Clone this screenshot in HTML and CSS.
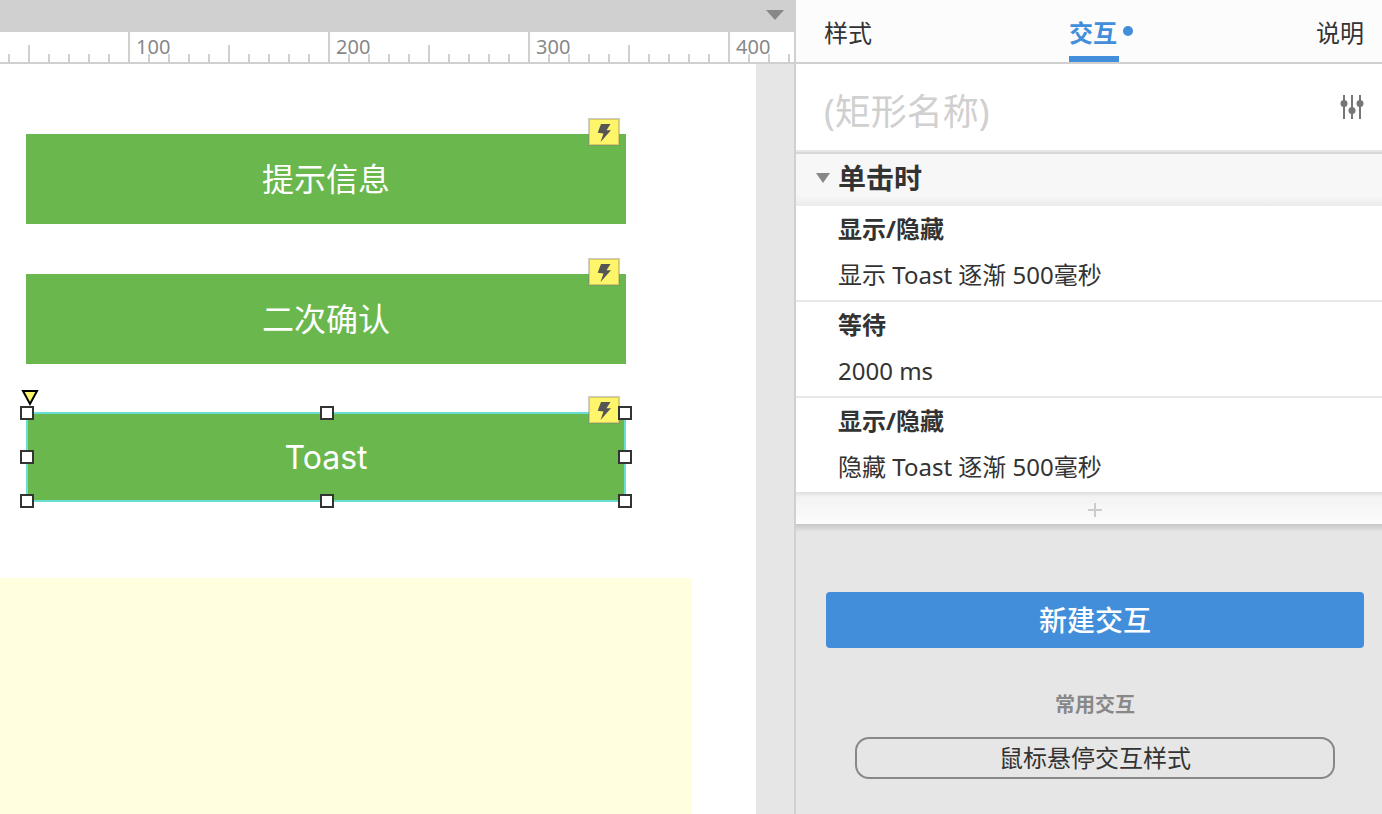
FILE: index.html
```html
<!DOCTYPE html>
<html lang="zh-CN">
<head>
<meta charset="utf-8">
<title>交互</title>
<link rel="stylesheet" href="styles.css">
</head>
<body>
<svg class="defs" aria-hidden="true">
  <symbol id="bolt" viewBox="0 0 32 28"><path d="M13 6h9.500l-4 6.300h4.500L12.500 24l3-8.500-5.800-.8z"/></symbol>
</svg>
<div class="app">
  <main class="workspace">
    <div class="topbar">
      <button class="page-menu" aria-label="页面列表"><svg viewBox="0 0 18 10"><path d="M0 0h18L9 10z"/></svg></button>
    </div>
    <div class="ruler">
      <span class="mark">100</span><span class="mark">200</span><span class="mark">300</span><span class="mark">400</span>
    </div>
    <div class="canvas">
      <div class="page">
        <div class="widget first">提示信息<span class="event"><svg><use href="#bolt"/></svg></span></div>
        <div class="widget second">二次确认<span class="event"><svg><use href="#bolt"/></svg></span></div>
        <div class="widget third selected">Toast<span class="event"><svg><use href="#bolt"/></svg></span>
          <svg class="corner" viewBox="0 0 18 18"><path d="M2 2h14L9 15z"/></svg>
          <i class="handle top left"></i><i class="handle top mid"></i><i class="handle top right"></i>
          <i class="handle center left"></i><i class="handle center right"></i>
          <i class="handle bottom left"></i><i class="handle bottom mid"></i><i class="handle bottom right"></i>
        </div>
        <div class="note"></div>
      </div>
    </div>
  </main>
  <aside class="panel">
    <div class="tabs" role="tablist">
      <button class="tab" role="tab">样式</button>
      <button class="tab active" role="tab" aria-selected="true">交互</button>
      <button class="tab" role="tab">说明</button>
    </div>
    <div class="name-row">
      <input class="name" type="text" placeholder="(矩形名称)" aria-label="矩形名称">
      <button class="settings" aria-label="设置">
        <svg viewBox="0 0 24 24"><path d="M4 0v24M12 0v24M20 0v24"/><circle cx="4" cy="8.500" r="3.500"/><circle cx="12" cy="15.500" r="3.500"/><circle cx="20" cy="8.500" r="3.500"/></svg>
      </button>
    </div>
    <button class="event-head" aria-expanded="true"><svg viewBox="0 0 14 10"><path d="M0 0h14L7 10z"/></svg>单击时</button>
    <ul class="actions">
      <li class="action"><h3 class="title">显示/隐藏</h3><p class="desc">显示 Toast 逐渐 500毫秒</p></li>
      <li class="action"><h3 class="title">等待</h3><p class="desc">2000 ms</p></li>
      <li class="action"><h3 class="title">显示/隐藏</h3><p class="desc">隐藏 Toast 逐渐 500毫秒</p></li>
    </ul>
    <button class="add" aria-label="添加动作"><svg viewBox="0 0 14 14"><path d="M7 0v14M0 7h14"/></svg></button>
    <div class="footer">
      <button class="new">新建交互</button>
      <h4 class="common">常用交互</h4>
      <button class="hover-style">鼠标悬停交互样式</button>
    </div>
  </aside>
</div>
</body>
</html>
```
FILE: styles.css
```css
* {
  box-sizing: border-box;
}

body {
  margin: 0;
  color: #333;
  font-family: "Noto Sans", "Noto Sans CJK SC", sans-serif;
  font-size: 24px;
}

button {
  margin: 0;
  padding: 0;
  border: 0;
  background: none;
  color: inherit;
  font: inherit;
}

svg {
  display: block;
}

.defs {
  position: absolute;
  width: 0;
  height: 0;
}

.app {
  display: flex;
  height: 100vh;
  overflow: hidden;
}

.workspace {
  display: flex;
  flex: 796 1 0;
  flex-direction: column;
  min-width: 0;
}

.topbar {
  display: flex;
  justify-content: flex-end;
  height: 32px;
  padding: 10px 12px 0;
  background: #d0d0d0;
}

.page-menu svg {
  width: 18px;
  height: 10px;
  fill: #888;
}

.page-menu {
  height: 10px;
}

.ruler {
  display: flex;
  height: 32px;
  padding-left: 128px;
  overflow: hidden;
  border-right: 2px solid #d0d0d0;
  border-bottom: 2px solid #d0d0d0;
  background:
    repeating-linear-gradient(90deg, #d0d0d0 0 2px, transparent 2px 20px) 8px 22px / 100% 8px no-repeat,
    repeating-linear-gradient(90deg, #d0d0d0 0 2px, transparent 2px 200px) 28px 13px / 100% 17px no-repeat,
    #fff;
}

.mark {
  flex: none;
  width: 200px;
  height: 30px;
  padding-left: 6px;
  border-left: 2px solid #d0d0d0;
  color: #888;
  font-size: 20px;
  line-height: 30px;
}

.canvas {
  flex: 1;
  min-height: 0;
  padding-right: 38px;
  border-right: 2px solid #d0d0d0;
  background: #e6e6e6;
}

.page {
  position: relative;
  height: 100%;
  overflow: hidden;
  background: #fff;
}

.widget {
  position: absolute;
  left: 26px;
  width: 600px;
  height: 90px;
  background: #69b74d;
  color: #fff;
  font-family: Inter, "Noto Sans CJK SC", sans-serif;
  font-size: 32px;
  line-height: 92px;
  text-align: center;
}

.first {
  top: 70px;
}

.second {
  top: 210px;
}

.third {
  top: 348px;
}

.selected {
  box-shadow: inset 0 0 0 2px #68ded4;
}

.event {
  position: absolute;
  top: -16px;
  right: 6px;
  width: 32px;
  height: 28px;
  border: 1px solid rgba(128, 128, 128, 0.4);
  background: #fff56b padding-box;
  box-shadow: inset 0 0 0 1px #d9ca60;
}

.event svg {
  width: 32px;
  height: 28px;
  margin: -1px;
  fill: #555;
}

.corner {
  position: absolute;
  top: -23px;
  left: -5px;
  width: 18px;
  height: 18px;
  fill: #fff56b;
  stroke: #000;
  stroke-width: 2;
}

.handle {
  position: absolute;
  width: 14px;
  height: 14px;
  border: 2px solid #333;
  background: #fff;
}

.handle.left {
  left: -6px;
}

.handle.mid {
  left: 294px;
}

.handle.right {
  right: -6px;
}

.handle.top {
  top: -6px;
}

.handle.center {
  top: 38px;
}

.handle.bottom {
  bottom: -6px;
}

.note {
  position: absolute;
  top: 514px;
  right: 64px;
  bottom: 0;
  left: 0;
  border-radius: 0 4px 0 0;
  background: #ffffdf;
}

.panel {
  display: flex;
  flex: 586 1 0;
  flex-direction: column;
  min-width: 0;
  overflow: hidden;
  background: #e6e6e6;
}

.tabs {
  display: flex;
  justify-content: space-between;
  height: 64px;
  padding: 0 18px 0 28px;
  border-bottom: 2px solid #d0d0d0;
  background: #fcfcfc;
}

.tab {
  position: relative;
  height: 62px;
  padding-top: 10px;
  border-bottom: 6px solid transparent;
  line-height: 46px;
}

.tab.active {
  padding-right: 2px;
  border-bottom-color: #428edb;
  color: #428edb;
  font-weight: bold;
}

.tab.active::after {
  content: "";
  position: absolute;
  top: 26px;
  right: -14px;
  width: 10px;
  height: 10px;
  border-radius: 50%;
  background: #428edb;
}

.name-row {
  display: flex;
  align-items: center;
  height: 88px;
  padding: 0 18px 0 28px;
  border-bottom: 2px solid #e6e6e6;
  background: #fff;
}

.name {
  flex: 1;
  min-width: 0;
  height: 60px;
  margin-top: 8px;
  padding: 0;
  border: 0;
  outline: 0;
  background: none;
  color: #333;
  font: inherit;
  font-size: 36px;
}

.name::placeholder {
  color: #d0d0d0;
  opacity: 1;
}

.settings svg {
  width: 24px;
  height: 24px;
  fill: #777;
  stroke: #777;
  stroke-width: 2;
}

.settings circle {
  stroke: none;
}

.event-head {
  display: flex;
  align-items: center;
  gap: 8px;
  height: 54px;
  padding: 0 20px 4px;
  border-top: 2px solid #d8d8d8;
  background: linear-gradient(#f7f7f7 80%, #ebebeb);
  font-size: 28px;
  font-weight: bold;
  line-height: 40px;
}

.event-head svg {
  width: 14px;
  height: 10px;
  fill: #888;
}

.actions {
  position: relative;
  z-index: 1;
  margin: 0;
  padding: 0;
  background: #fff;
  list-style: none;
}

.action {
  height: 96px;
  padding: 3px 42px 0;
}

.action + .action {
  border-top: 2px solid #e8e8e8;
}

.action:first-child {
  height: 94px;
}

.title,
.desc {
  margin: 0;
  font-size: 24px;
  line-height: 40px;
}

.desc {
  margin-top: 6px;
}

.add {
  display: flex;
  align-items: center;
  justify-content: center;
  height: 32px;
  padding: 4px 18px 0 30px;
  background: linear-gradient(#dedede, #f3f3f3 5px, #fcfcfc);
}

.add svg {
  width: 14px;
  height: 14px;
  stroke: #ccc;
  stroke-width: 2;
}

.footer {
  display: flex;
  flex-direction: column;
  padding: 68px 18px 0 30px;
  background: linear-gradient(#c6c6c6, #e6e6e6 8px);
}

.new {
  height: 56px;
  padding-bottom: 2px;
  border-radius: 4px;
  background: #428edb;
  color: #fff;
  font-size: 28px;
  font-weight: 500;
}

.common {
  margin: 42px 0 17px;
  color: #888;
  font-size: 20px;
  line-height: 30px;
  text-align: center;
}

.hover-style {
  height: 42px;
  margin: 0 29px;
  border: 2px solid #888;
  border-radius: 14px;
  line-height: 38px;
}
```
